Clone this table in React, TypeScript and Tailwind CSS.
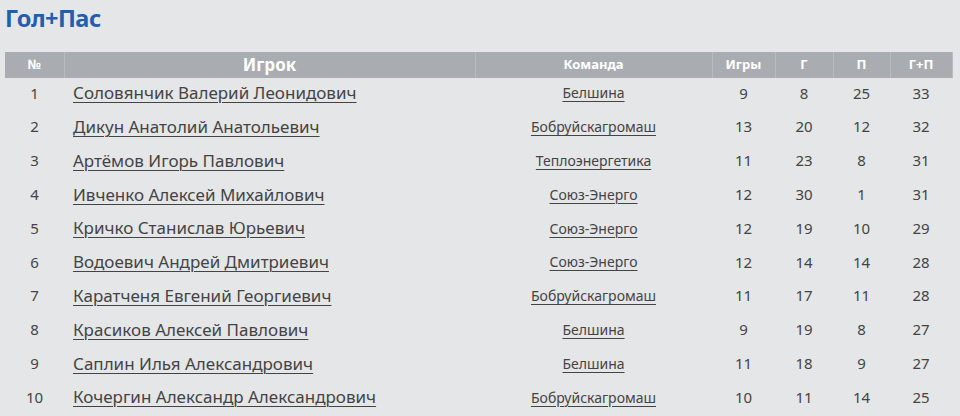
import React from "react"

interface Row {
  n: number
  name: string
  team: string
  games: number
  goals: number
  assists: number
}

const rows: Row[] = [
  { n: 1, name: "Соловянчик Валерий Леонидович", team: "Белшина", games: 9, goals: 8, assists: 25 },
  { n: 2, name: "Дикун Анатолий Анатольевич", team: "Бобруйскагромаш", games: 13, goals: 20, assists: 12 },
  { n: 3, name: "Артёмов Игорь Павлович", team: "Теплоэнергетика", games: 11, goals: 23, assists: 8 },
  { n: 4, name: "Ивченко Алексей Михайлович", team: "Союз-Энерго", games: 12, goals: 30, assists: 1 },
  { n: 5, name: "Кричко Станислав Юрьевич", team: "Союз-Энерго", games: 12, goals: 19, assists: 10 },
  { n: 6, name: "Водоевич Андрей Дмитриевич", team: "Союз-Энерго", games: 12, goals: 14, assists: 14 },
  { n: 7, name: "Каратченя Евгений Георгиевич", team: "Бобруйскагромаш", games: 11, goals: 17, assists: 11 },
  { n: 8, name: "Красиков Алексей Павлович", team: "Белшина", games: 9, goals: 19, assists: 8 },
  { n: 9, name: "Саплин Илья Александрович", team: "Белшина", games: 11, goals: 18, assists: 9 },
  { n: 10, name: "Кочергин Александр Александрович", team: "Бобруйскагромаш", games: 10, goals: 11, assists: 14 },
]

export default function App() {
  return (
    <div
      className="h-[416px] w-[960px] overflow-hidden bg-[#e5e6e8] px-[5px] text-[#444]"
      style={{ fontFamily: '"Noto Sans", "Open Sans", sans-serif' }}
    >
      <h2 className="pt-[3px] text-[23.5px] leading-[30px] font-bold tracking-[-0.5px] text-[#1f5fae]">Гол+Пас</h2>

      <table className="mt-[19px] w-[947px] table-fixed border-collapse">
        <colgroup>
          <col className="w-[59px]" />
          <col className="w-[411px]" />
          <col className="w-[237px]" />
          <col className="w-[63px]" />
          <col className="w-[58px]" />
          <col className="w-[57px]" />
          <col className="w-[62px]" />
        </colgroup>
        <thead>
          <tr className="h-[25px] bg-[#a9adb2] font-bold text-white">
            <th className="text-[13px]">№</th>
            <th className="border-l border-[#b8bcc1] text-[17px]">Игрок</th>
            <th className="border-l border-[#b8bcc1] text-[13px]">Команда</th>
            <th className="border-l border-[#b8bcc1] text-[13px]">Игры</th>
            <th className="border-l border-[#b8bcc1] text-[13px]">Г</th>
            <th className="border-l border-[#b8bcc1] text-[13px]">П</th>
            <th className="border-x border-[#b8bcc1] text-[13px]">Г+П</th>
          </tr>
        </thead>
        <tbody>
          {rows.map((r) => (
            <tr key={r.n} className="h-[33.8px] text-[15px] [&>td]:pb-[3px]">
              <td className="text-center">{r.n}</td>
              <td className="pl-[9px] text-[17px]">
                <a href="#" className="underline decoration-1 underline-offset-[3px]">
                  {r.name}
                </a>
              </td>
              <td className="text-center text-[14px]">
                <a href="#" className="underline decoration-1 underline-offset-[3px]">
                  {r.team}
                </a>
              </td>
              <td className="text-center">{r.games}</td>
              <td className="text-center">{r.goals}</td>
              <td className="text-center">{r.assists}</td>
              <td className="text-center">{r.goals + r.assists}</td>
            </tr>
          ))}
        </tbody>
      </table>
    </div>
  )
}
